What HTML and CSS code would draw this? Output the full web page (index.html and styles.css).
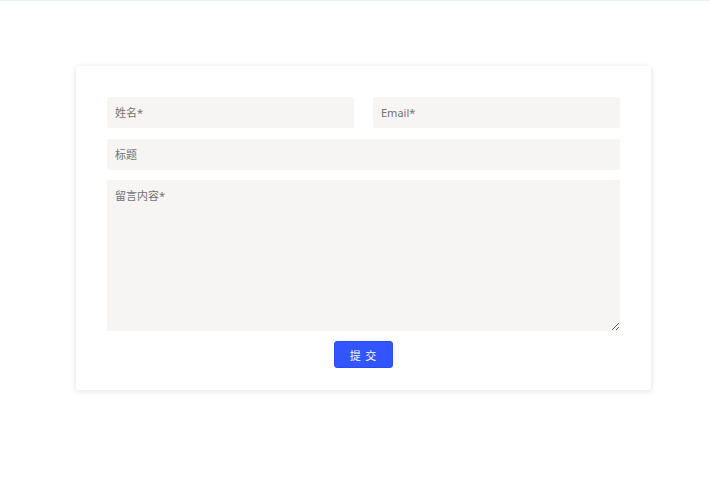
FILE: index.html
```html
<!DOCTYPE html>
<html lang="zh">
<head>
<meta charset="utf-8">
<link rel="stylesheet" href="styles.css">
</head>
<body>
<div class="topline"></div>
<div class="card">
  <form class="form">
    <div class="row">
      <input class="field half" type="text" placeholder="姓名*">
      <input class="field half" type="text" placeholder="Email*">
    </div>
    <input class="field" type="text" placeholder="标题">
    <textarea class="field area" placeholder="留言内容*"></textarea>
    <div class="actions">
      <button class="submit" type="button">提 交</button>
    </div>
  </form>
</div>
<div class="spacer"></div>
</body>
</html>
```
FILE: styles.css
```css
html, body {
  margin: 0;
  padding: 0;
  background: #fff;
  font-family: "Noto Sans", "Noto Sans CJK SC", sans-serif;
}
.topline {
  height: 1px;
  background: #e3f2ef;
}
.card {
  margin: 65px 0 0 76px;
  width: 575px;
  box-sizing: border-box;
  padding: 31px 31px 22px;
  background: #fff;
  border-radius: 3px;
  box-shadow: 0 1px 6px rgba(0, 0, 0, 0.12);
}
.spacer {
  height: 100px;
}
.form {
  display: flex;
  flex-direction: column;
  gap: 10px;
}
.row {
  display: flex;
  gap: 19px;
  margin-bottom: 1px;
}
.field {
  display: block;
  width: 100%;
  height: 31px;
  box-sizing: border-box;
  border: none;
  outline: none;
  border-radius: 2px;
  background: #f6f5f3;
  padding: 0 8px;
  font-family: "Noto Sans", "Noto Sans CJK SC", sans-serif;
  font-size: 11px;
  color: #333;
}
.half {
  flex: 1;
  min-width: 0;
}
.field::placeholder {
  color: #737373;
}
.area {
  height: 151px;
  padding: 7px 8px;
  resize: vertical;
}
.actions {
  display: flex;
  justify-content: center;
}
.submit {
  width: 59px;
  height: 27px;
  border: 1px solid #2a4df0;
  border-radius: 3px;
  background: #3355ff;
  color: #fff;
  font-family: "Noto Sans CJK SC", sans-serif;
  font-size: 11px;
  letter-spacing: 1px;
  padding: 0;
  cursor: pointer;
}
```
